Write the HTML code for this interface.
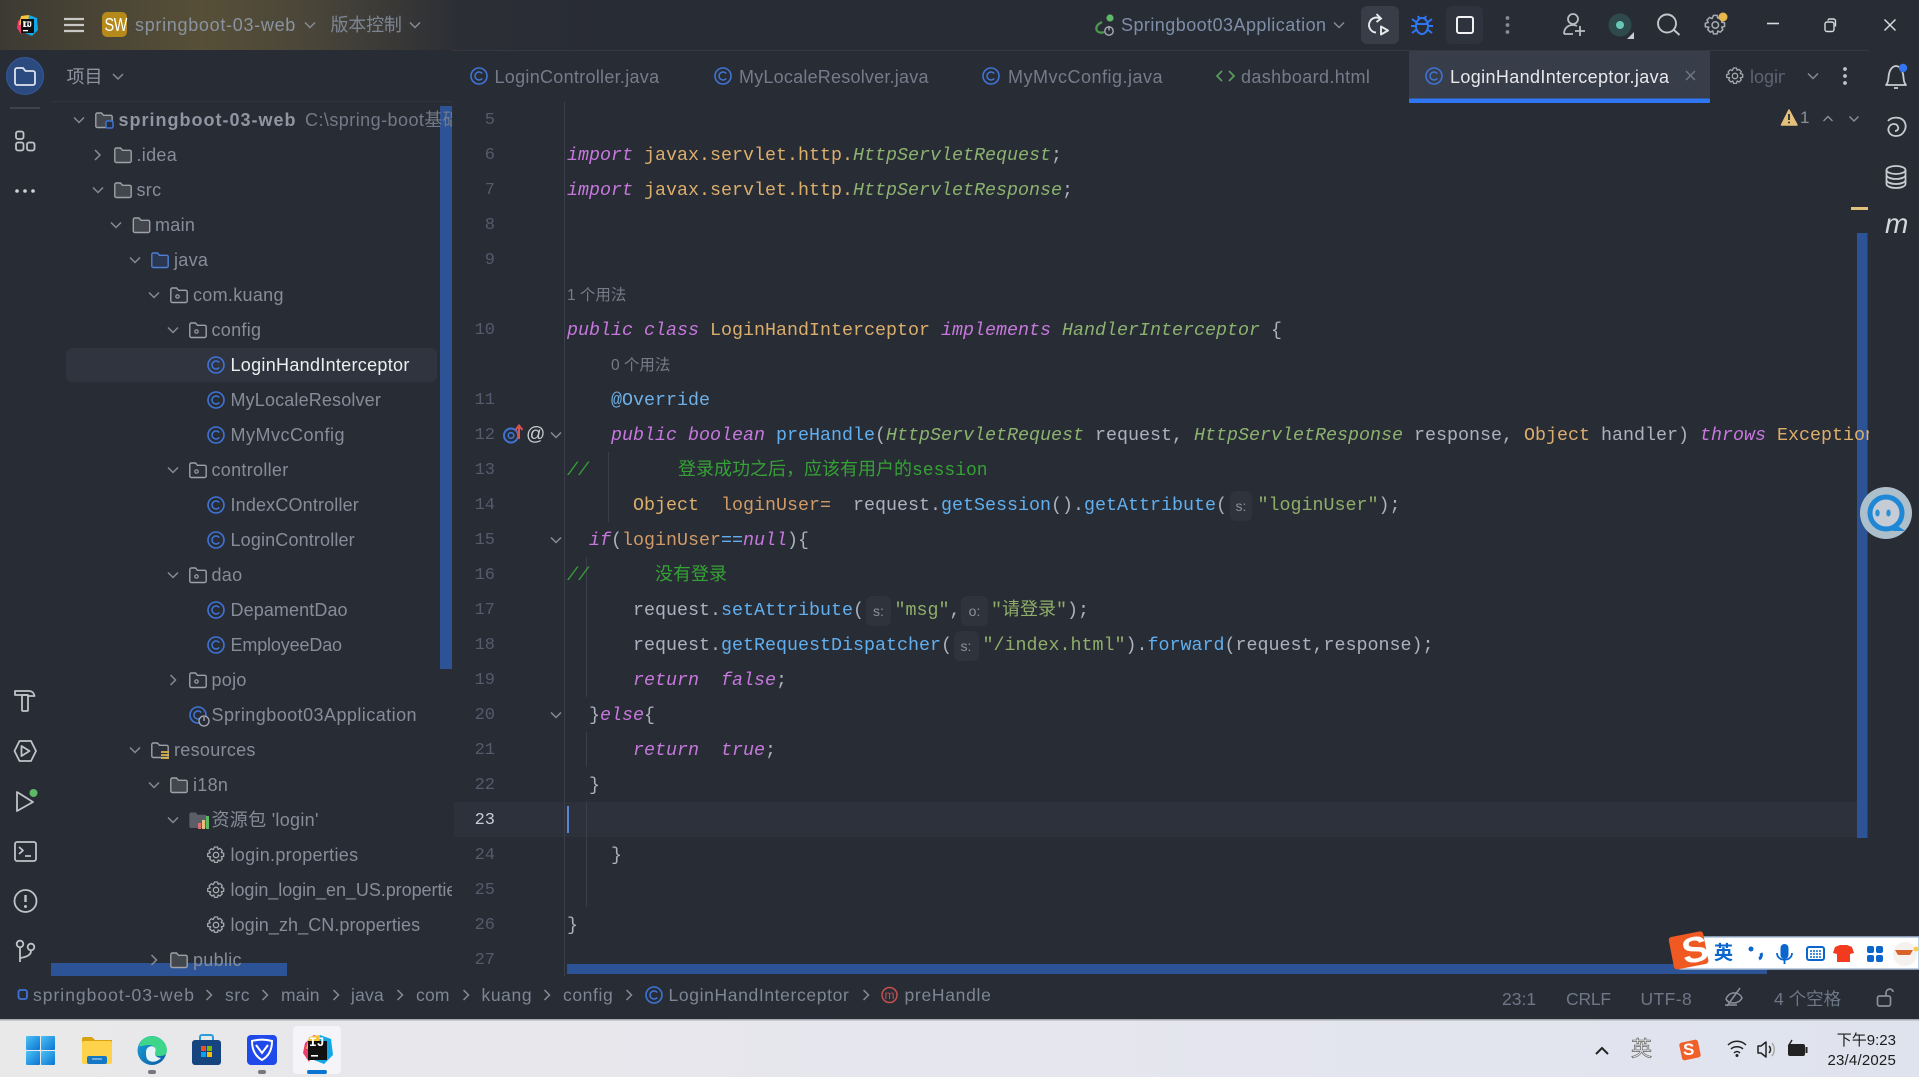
<!DOCTYPE html>
<html lang="zh"><head><meta charset="utf-8"><title>springboot-03-web</title>
<style>
html,body{margin:0;padding:0;width:1919px;height:1077px;overflow:hidden;background:#282c35}
body{position:relative;font-family:"Liberation Sans","Noto Sans CJK SC",sans-serif;font-size:18px;color:#868d99}
.a{position:absolute;white-space:pre;line-height:36px;height:36px}
svg.l{position:absolute;left:0;top:0}
.tree{position:absolute;left:0;top:0;width:452px;height:976px;overflow:hidden}
.tree .a{letter-spacing:.3px}
.ed{position:absolute;left:454px;top:102px;width:1415px;height:874px;overflow:hidden}
.ln{position:absolute;left:440px;width:55px;text-align:right;font:17px/36px "Liberation Mono",monospace;color:#535b6c;height:36px}
.c{position:absolute;white-space:pre;line-height:36px;height:36px;font-family:"Liberation Mono","Noto Sans CJK SC",monospace;font-size:18.33px;color:#abb2bf}
.k{color:#c678dd;font-style:italic}.g{color:#8cb26f;font-style:italic}.m{color:#61afef}.o{color:#dcae6c}.s{color:#8fae6a}.v{color:#d19a66}.e{color:#35a235}.z{font-size:18px}
.h{position:absolute;white-space:pre;line-height:36px;height:36px;font-size:15.5px;color:#757b87}
.iv{position:absolute;font-size:14px;line-height:30px;color:#8a8f99;background:#2f333c;border-radius:6px;height:30px;text-align:center}
.tab{letter-spacing:.2px;color:#747c8a}
.st{color:#6d7786;font-size:17.5px}
.bc{color:#7d8694;font-size:17.5px;letter-spacing:.2px}
</style></head><body>

<svg class="l" width="1919" height="1077" viewBox="0 0 1919 1077" fill="none">
<defs>
<linearGradient id="tb" x1="0" x2="1"><stop offset="0" stop-color="#3c3a33"/><stop offset=".105" stop-color="#574f37"/><stop offset=".16" stop-color="#4a4639"/><stop offset=".24" stop-color="#2c2e35"/><stop offset=".32" stop-color="#282c35"/></linearGradient>
<linearGradient id="bar" x1="0" x2="1"><stop offset="0" stop-color="#e9e9ea"/><stop offset=".5" stop-color="#e6e6ee"/><stop offset="1" stop-color="#dfe3ee"/></linearGradient>
<linearGradient id="win" x1="0" y1="0" x2="1" y2="1"><stop offset="0" stop-color="#4cc2f5"/><stop offset="1" stop-color="#0b74d2"/></linearGradient>
<linearGradient id="edge" x1="0" y1="0" x2="1" y2="1"><stop offset="0" stop-color="#1aa3d8"/><stop offset="1" stop-color="#0c59a4"/></linearGradient>
<path id="dn" d="M-5-2.5L0 2.5 5-2.5" stroke="#868b93" stroke-width="1.5"/>
<path id="rt" d="M-2.5-5L2.5 0-2.5 5" stroke="#868b93" stroke-width="1.5"/>
<path id="fs" d="M.8-5.5A1.5 1.5 0 0 1 2.3-7H6.5l2 2.3h7.2a1.5 1.5 0 0 1 1.5 1.5V6a1.5 1.5 0 0 1-1.5 1.5H2.3A1.5 1.5 0 0 1 .8 6z"/>
<use id="fo" href="#fs" fill="#43464d" stroke="#9da1a8" stroke-width="1.4"/>
<g id="pk"><use href="#fs" fill="#2c2f38" stroke="#9da1a8" stroke-width="1.4"/><circle cx="7.5" cy="1.5" r="1.7" stroke="#9da1a8" stroke-width="1.2"/></g>
<g id="cl"><circle cx="9" cy="0" r="8" stroke="#3f74d6" stroke-width="1.6"/><path d="M12.2-2.4A4 4 0 1 0 12.2 2.4" stroke="#3f74d6" stroke-width="1.5"/></g>
<g id="gr"><path d="M7.5-8h3l.6 2.3 2-.9 2.2 2.2-1 2 2.4.6v3l-2.4.6 1 2-2.2 2.2-2-1-.6 2.4h-3l-.6-2.4-2 1-2.2-2.2 1-2L.7 1.5v-3l2.4-.6-1-2 2.2-2.2 2 .9z" stroke="#a6a9b0" stroke-width="1.3" stroke-linejoin="round"/><circle cx="9" cy="0" r="2.7" stroke="#a6a9b0" stroke-width="1.3"/></g>
</defs>

<!-- bars -->
<rect x="0" y="0" width="1919" height="50" fill="url(#tb)"/>
<rect x="452" y="50" width="1417" height="1" fill="#343843"/>
<rect x="51" y="101" width="401" height="1" fill="#30343d"/>
<rect x="10" y="107" width="30" height="2" fill="#3d424d"/>
<rect x="0" y="1020" width="1919" height="57" fill="url(#bar)"/>
<rect x="0" y="1019" width="1919" height="1.5" fill="#a9abb0"/>

<!-- title bar icons -->
<g transform="translate(16 15)">
<polygon points="2,6 9,0 16,3 10,10 5,19 1,13" fill="#ee3b6b"/><polygon points="13,0 21,3 22,15 16,21 9,18" fill="#12a8e8"/><polygon points="5,1 13,0 12,8 3,10" fill="#f8c23a"/>
<rect x="5" y="4" width="13" height="14" fill="#111"/><rect x="7" y="15" width="5" height="1.3" fill="#fff"/><path d="M8 6v5M12 6v5M11 11h2" stroke="#fff" stroke-width="1.2"/>
</g>
<path d="M64 19h20M64 25h20M64 31h20" stroke="#c8c8c4" stroke-width="2.2"/>
<rect x="102" y="12" width="25" height="25" rx="5" fill="#b58a1b"/>
<use href="#dn" x="310" y="25"/><use href="#dn" x="415" y="25"/>

<path d="M1097 31c-2-4 1-7 5-9" stroke="#4d9a4f" stroke-width="2.2"/><path d="M1097 31c2 2 5 2 7 1" stroke="#4d9a4f" stroke-width="2.2"/>
<circle cx="1110" cy="18" r="3.6" fill="#5fb865"/><circle cx="1109" cy="31" r="4.2" stroke="#a8acb3" stroke-width="1.4"/><path d="M1109 26v4.5" stroke="#a8acb3" stroke-width="1.4"/>
<use href="#dn" x="1339" y="25" />
<rect x="1361" y="6" width="38" height="38" rx="6" fill="#383d47"/>
<path d="M1381 19A7.5 7.5 0 1 0 1376 32.500" stroke="#e7e9ec" stroke-width="1.900"/><path d="M1376.500 14l4.500 4.500-4.500 3.500" stroke="#e7e9ec" stroke-width="1.900"/><path d="M1381 26.500l7 4-7 4z" stroke="#e7e9ec" stroke-width="1.900" stroke-linejoin="round"/>
<g stroke="#2f76f2" stroke-width="2"><ellipse cx="1422" cy="26" rx="6" ry="8"/><path d="M1416 24h12M1418 16l1.5 3M1426 16l-1.5 3M1412 19l4 3M1432 19l-4 3M1411 26h5M1433 26h-5M1412 33l4-3M1432 33l-4-3"/></g>
<rect x="1446" y="6" width="37" height="38" rx="6" fill="#2f333d"/>
<rect x="1457" y="17" width="16" height="16" rx="2" stroke="#f0f1f3" stroke-width="2"/>
<g fill="#888d95"><circle cx="1507.5" cy="18" r="1.9"/><circle cx="1507.5" cy="25" r="1.9"/><circle cx="1507.5" cy="32" r="1.9"/></g>
<g stroke="#b9bcc2" stroke-width="1.8"><circle cx="1573" cy="19" r="5"/><path d="M1564 34c0-5 3-9 9-9 2 0 3 .5 4 1M1564 34h9"/><path d="M1575 31h10M1580 26v10"/></g>
<circle cx="1620" cy="25" r="11.5" fill="#2f4a4d"/><circle cx="1620" cy="25" r="4" fill="#66c7b7"/><path d="M1634 32v7h-7z" fill="#c8cbd0"/>
<circle cx="1667" cy="23.5" r="9" stroke="#c3c6cb" stroke-width="1.9"/><path d="M1674 30l5.5 5" stroke="#c3c6cb" stroke-width="1.9"/>
<use href="#gr" transform="translate(1704.5 25) scale(1.2)"/>
<circle cx="1723" cy="17" r="4.5" fill="#e8b94e"/>
<path d="M1767 23.5h12" stroke="#d8dade" stroke-width="1.6"/>
<rect x="1825" y="22" width="9" height="9.5" rx="2" stroke="#d8dade" stroke-width="1.4"/><path d="M1828 20.5c0-1 .8-1.5 1.5-1.5h4c1.2 0 2 1 2 2v5.5" stroke="#d8dade" stroke-width="1.4"/>
<path d="M1884.5 19.5l11 11M1895.5 19.5l-11 11" stroke="#d8dade" stroke-width="1.5"/>

<!-- left strip -->
<ellipse cx="25" cy="76" rx="18.5" ry="18.5" fill="#2a4a80" stroke="#36599c" stroke-width="1"/>
<path d="M15 70a2 2 0 0 1 2-2h6l2.5 3H33a2 2 0 0 1 2 2v10a2 2 0 0 1-2 2H17a2 2 0 0 1-2-2z" stroke="#dfe4ee" stroke-width="1.8"/>
<g stroke="#c0c3c9" stroke-width="1.8"><rect x="16" y="131.5" width="7.5" height="7.5" rx="2"/><rect x="16" y="142.5" width="7.5" height="8" rx="2"/><rect x="27" y="142.5" width="7.5" height="8" rx="2"/></g>
<g fill="#d0d3d8"><circle cx="17" cy="191" r="1.8"/><circle cx="25" cy="191" r="1.8"/><circle cx="33" cy="191" r="1.8"/></g>
<g stroke="#c0c3c9" stroke-width="1.8" stroke-linejoin="round">
<path d="M15 691h14c3 0 5 2 5.5 5h-6.5v-1H15z"/><rect x="22" y="695" width="6" height="16" rx="1"/>
<path d="M14.5 751l5-10h11.5l5 10-5 10H19.5z"/><path d="M21.5 746l8 5-8 5z"/>
<path d="M17 792l16 10-16 9z"/>
<rect x="15" y="842" width="21" height="19" rx="2"/><path d="M19 847l4 3.5-4 3.5M25 856h6"/>
<circle cx="25.5" cy="901" r="11"/>
<circle cx="20" cy="944" r="3.3"/><circle cx="31" cy="947" r="3.3"/><path d="M20 948v14M31 951c0 4-4 6-11 7"/>
</g>
<circle cx="33.5" cy="793" r="4" fill="#5fb865"/>
<path d="M25.5 895v7" stroke="#c0c3c9" stroke-width="2.4"/><circle cx="25.5" cy="906.5" r="1.5" fill="#c0c3c9"/>

<!-- selected row -->
<rect x="66" y="348" width="371" height="34" rx="6" fill="#30343e"/>
<!-- tree scrollbars -->
<rect x="440" y="106" width="12" height="563" fill="#2c5396"/>
<rect x="51" y="963" width="236" height="13" fill="#2c5396"/>

<!-- tree icons -->
<use href="#dn" x="79" y="120"/><g transform="translate(95 120)"><use href="#fs" fill="#43464d" stroke="#9da1a8" stroke-width="1.4"/><rect x="11" y="1" width="7" height="7" rx="1.5" fill="#282c35" stroke="#3f74d6" stroke-width="1.5"/></g>
<use href="#rt" x="97.5" y="155"/><use href="#fo" x="114" y="155"/>
<use href="#dn" x="98" y="190"/><use href="#fo" x="114" y="190"/>
<use href="#dn" x="116" y="225"/><use href="#fo" x="132.5" y="225"/>
<use href="#dn" x="135" y="260"/><use href="#fs" x="151" y="260" fill="#2c3750" stroke="#4f7fd8" stroke-width="1.4"/>
<use href="#dn" x="154" y="295"/><use href="#pk" x="170" y="295"/>
<use href="#dn" x="173" y="330"/><use href="#pk" x="189" y="330"/>
<use href="#cl" x="207" y="365"/><use href="#cl" x="207" y="400"/><use href="#cl" x="207" y="435"/>
<use href="#dn" x="173" y="470"/><use href="#pk" x="189" y="470"/>
<use href="#cl" x="207" y="505"/><use href="#cl" x="207" y="540"/>
<use href="#dn" x="173" y="575"/><use href="#pk" x="189" y="575"/>
<use href="#cl" x="207" y="610"/><use href="#cl" x="207" y="645"/>
<use href="#rt" x="173" y="680"/><use href="#pk" x="189" y="680"/>
<use href="#cl" x="189" y="715"/><circle cx="204" cy="721" r="5" fill="#282c35" stroke="#a8acb3" stroke-width="1.3"/><path d="M204 717v4" stroke="#a8acb3" stroke-width="1.3"/>
<use href="#dn" x="135" y="750"/><use href="#fs" x="151" y="750" fill="#2c2f38" stroke="#9da1a8" stroke-width="1.4"/><path d="M161 752h8M161 755h8M161 758h8" stroke="#e0b44a" stroke-width="1.8"/>
<use href="#dn" x="154" y="785"/><use href="#fo" x="170" y="785"/>
<use href="#dn" x="173" y="820"/><use href="#fs" x="189" y="820" fill="#5a5e66" stroke="#5a5e66" stroke-width="1"/>
<rect x="198" y="823" width="3" height="6" fill="#e06c75"/><rect x="202" y="820" width="3" height="9" fill="#e5c07b"/><rect x="206" y="816" width="3" height="13" fill="#5fb865"/>
<use href="#gr" x="207" y="855"/><use href="#gr" x="207" y="890"/><use href="#gr" x="207" y="925"/>
<use href="#rt" x="154" y="960"/><use href="#fo" x="170" y="960"/>

<!-- tabs -->
<rect x="1409" y="51" width="301" height="52" fill="#383d4a"/>
<rect x="1409" y="98.5" width="301" height="4.5" rx="1" fill="#2f76f2"/>
<use href="#cl" x="470" y="76"/><use href="#cl" x="714" y="76"/><use href="#cl" x="982" y="76"/><use href="#cl" x="1425" y="76"/>
<path d="M1222 71l-5 5 5 5M1229 71l5 5-5 5" stroke="#5a9e5d" stroke-width="1.7"/>
<path d="M1686 71l9 9M1695 71l-9 9" stroke="#737984" stroke-width="1.4"/>
<use href="#gr" x="1726" y="76"/>
<use href="#dn" x="1813" y="76" /><g fill="#c0c3c9"><circle cx="1845" cy="69" r="1.9"/><circle cx="1845" cy="76" r="1.9"/><circle cx="1845" cy="83" r="1.9"/></g>

<!-- right strip -->
<g stroke="#c8cbd0" stroke-width="1.8" stroke-linejoin="round">
<path d="M1886 85c3-3 2-7 3-11 1-5 4-8 7-8s6 3 7 8c1 4 0 8 3 11z"/><path d="M1894 88h4"/>
<path d="M1888 121c3-4 12-5 16 0 4 6 0 15-8 15-6 0-9-5-7-9 2-4 8-4 9 0 1 2-1 4-3 4"/>
<ellipse cx="1896" cy="170" rx="9.500" ry="4"/><path d="M1886.500 170v14c0 2 4 4 9.500 4s9.500-2 9.500-4v-14M1886.500 175c0 2 4 4 9.500 4s9.500-2 9.500-4M1886.500 180c0 2 4 4 9.500 4s9.500-2 9.500-4"/>
</g>
<circle cx="1903" cy="68" r="4.200" fill="#3574f0"/>

<!-- warn -->
<path d="M1789 110l8 15h-15.500z" fill="#e5c07b" stroke="#e5c07b" stroke-width="1.500" stroke-linejoin="round"/><path d="M1789 114v6" stroke="#282c35" stroke-width="1.800"/><circle cx="1789" cy="122.500" r="1" fill="#282c35"/>
<path d="M1823.500 121l4.500-4.500 4.500 4.500" stroke="#8a8f98" stroke-width="1.400"/><path d="M1849.500 116.500l4.500 4.500 4.500-4.500" stroke="#8a8f98" stroke-width="1.400"/>

<!-- editor decor -->
<rect x="454" y="802" width="1403" height="35" fill="#2c313c"/>
<rect x="564" y="102" width="1" height="874" fill="#3a3f4b"/>
<g fill="#3a3f4a"><rect x="608" y="452" width="1" height="70"/><rect x="586" y="557" width="1" height="140"/><rect x="586" y="732" width="1" height="35"/><rect x="586" y="802" width="1" height="105"/></g>
<rect x="1857" y="233" width="10.500" height="605" fill="#2c5396"/>
<rect x="1851" y="207" width="17" height="3" fill="#e5c07b"/>
<rect x="567" y="964" width="1200" height="10" fill="#2c5396"/>
<rect x="567" y="806" width="2" height="27" fill="#5b86d8"/>
<!-- gutter -->
<circle cx="511" cy="435.500" r="7" stroke="#3f74d6" stroke-width="2"/><circle cx="511" cy="435.500" r="2.800" stroke="#3f74d6" stroke-width="1.600"/>
<path d="M519 439v-13M515.500 430l3.500-4.500 3.500 4.500" stroke="#d9534f" stroke-width="2"/>
<use href="#dn" x="556" y="435"/><use href="#dn" x="556" y="540"/><use href="#dn" x="556" y="715"/>

<!-- status bar -->
<rect x="18.500" y="990" width="8.500" height="9" rx="2" stroke="#3f74d6" stroke-width="1.800"/>
<use href="#rt" x="209" y="995"/><use href="#rt" x="265" y="995"/><use href="#rt" x="336" y="995"/><use href="#rt" x="400" y="995"/><use href="#rt" x="466" y="995"/><use href="#rt" x="547" y="995"/><use href="#rt" x="629" y="995"/><use href="#rt" x="866" y="995"/>
<use href="#cl" x="645" y="995"/>
<circle cx="889.500" cy="995" r="7.500" stroke="#c4504f" stroke-width="1.500"/>
<g stroke="#8a919c" stroke-width="1.500"><path d="M1726 999c3-8 13-8 16-1-3 6-13 7-16 1z"/><path d="M1727 1006l13-18M1725 1005h12"/></g>
<g stroke="#8a919c" stroke-width="1.700"><rect x="1877.500" y="996" width="13" height="10" rx="2"/><path d="M1886 996v-3c0-5 7-5 7-1"/></g>

<!-- taskbar -->
<rect x="293" y="1026" width="48" height="48" rx="4" fill="#f4f4f9"/>
<g fill="url(#win)"><rect x="26" y="1036" width="14" height="14" rx="1"/><rect x="41" y="1036" width="14" height="14" rx="1"/><rect x="26" y="1051" width="14" height="14" rx="1"/><rect x="41" y="1051" width="14" height="14" rx="1"/></g>
<path d="M82 1039a2 2 0 0 1 2-2h8l3 3h17v4H82z" fill="#d9a20f"/><rect x="82" y="1041" width="30" height="23" rx="2" fill="#ffd24c"/><rect x="87" y="1056" width="20" height="8" rx="2" fill="#1677c4"/><path d="M92 1059h10" stroke="#bfe0f5" stroke-width="1"/>
<circle cx="152" cy="1050.500" r="14.500" fill="url(#edge)"/><path d="M139 1046c3-10 13-12 20-8 6 3 8 8 8 13 0 4-4 5-8 5-3 0-5-1-4-3 2-4-1-8-6-8-5 0-8 2-10 1z" fill="#3dd68a"/><path d="M146 1052c0-5 5-7 8-5 3 2 1 5 1 7s3 4 6 4c-4 4-9 5-13 2-2-2-2-5-2-8z" fill="#ffffff" opacity=".9"/>
<path d="M200 1041v-4a2 2 0 0 1 2-2h9a2 2 0 0 1 2 2v4" stroke="#2b9cd8" stroke-width="2"/><rect x="192" y="1040" width="29" height="25" rx="3" fill="#15447e"/><rect x="201" y="1046" width="5" height="5" fill="#f25022"/><rect x="207" y="1046" width="5" height="5" fill="#7fba00"/><rect x="201" y="1052" width="5" height="5" fill="#00a4ef"/><rect x="207" y="1052" width="5" height="5" fill="#ffb900"/>
<rect x="247" y="1035" width="30" height="30" rx="4" fill="#1f49ea"/><path d="M252 1041c7-2 13-2 20 0 0 9-3 15-10 19-7-4-10-10-10-19z" stroke="#fff" stroke-width="2"/><path d="M256 1045l6 8 6-8" stroke="#fff" stroke-width="2"/>
<g transform="translate(302 1035)">
<polygon points="3,8 12,0 22,4 14,14 7,27 1,18" fill="#ee3b6b"/><polygon points="18,0 29,4 31,20 22,29 12,25" fill="#12a8e8"/><polygon points="7,2 18,0 17,11 4,14" fill="#f8c23a"/>
<rect x="6" y="6" width="19" height="19" fill="#111"/><rect x="9" y="20" width="7" height="1.600" fill="#fff"/>
</g>
<rect x="148" y="1070" width="8" height="4" rx="2" fill="#77787c"/><rect x="258" y="1070" width="8" height="4" rx="2" fill="#77787c"/>
<rect x="307" y="1070" width="20" height="4" rx="2" fill="#0a74d0"/>
<!-- tray -->
<path d="M1596 1054l6-6 6 6" stroke="#222" stroke-width="2"/>
<g transform="rotate(-12 1690 1050)"><rect x="1680.500" y="1041" width="19" height="18" rx="2.500" fill="#f0602a"/></g>
<g stroke="#222" stroke-width="1.500"><path d="M1728 1045c5-5 13-5 18 0M1731 1049c3-3 9-3 12 0M1734 1053c2-2 4-2 6 0"/><path d="M1758 1046h3l5-4v15l-5-4h-3z" stroke-linejoin="round"/><path d="M1769 1046c2 2 2 5 0 7"/><path d="M1772 1043c3 4 3 9 0 13" stroke="#aaa"/></g>
<circle cx="1737" cy="1055.500" r="1.500" fill="#222"/>
<rect x="1788" y="1044" width="17" height="12" rx="2" fill="#222"/><rect x="1805.500" y="1047" width="2" height="6" fill="#222"/><path d="M1792 1040l-3 5h4l-2 4" stroke="#222" stroke-width="1.400"/>
</svg>

<!-- TITLE TEXT -->
<div class="a" style="left:102px;top:7px;width:25px;text-align:center;color:#fff;font-size:18px;letter-spacing:-.5px;transform:scaleX(.8)">SW</div>
<div class="a" style="left:135px;top:7px;letter-spacing:.7px;color:#8a93a2">springboot-03-web</div>
<div class="a" style="left:330.500px;top:7px;color:#7d8593;letter-spacing:-.2px">版本控制</div>
<div class="a" style="left:1121px;top:7px;letter-spacing:.45px;color:#7e8ea6">Springboot03Application</div>
<div class="a" style="left:22.500px;top:17.500px;color:#fff;font:bold 8px/16px 'Liberation Mono',monospace;height:16px">IJ</div>
<div class="a" style="left:309px;top:1034px;color:#fff;font:bold 13px/18px 'Liberation Mono',monospace;height:18px">IJ</div>

<!-- TREE -->
<div class="tree">
<div class="a" style="left:66.500px;top:59px;color:#8d94a0;letter-spacing:0">项目</div>
<div class="a" style="left:118.500px;top:102px;font-weight:bold;color:#8f96a2;letter-spacing:1px">springboot-03-web</div>
<div class="a" style="left:305px;top:102px;color:#737a87;letter-spacing:.45px">C:\spring-boot基础项目</div>
<div class="a" style="left:136.500px;top:137px">.idea</div>
<div class="a" style="left:136.500px;top:172px">src</div>
<div class="a" style="left:155px;top:207px">main</div>
<div class="a" style="left:174px;top:242px">java</div>
<div class="a" style="left:193px;top:277px">com.kuang</div>
<div class="a" style="left:211.500px;top:312px">config</div>
<div class="a" style="left:230.500px;top:347px;color:#eceef1">LoginHandInterceptor</div>
<div class="a" style="left:230.500px;top:382px;letter-spacing:.15px">MyLocaleResolver</div>
<div class="a" style="left:230.500px;top:417px;letter-spacing:.5px">MyMvcConfig</div>
<div class="a" style="left:211.500px;top:452px">controller</div>
<div class="a" style="left:230.500px;top:487px;letter-spacing:.16px">IndexCOntroller</div>
<div class="a" style="left:230.500px;top:522px;letter-spacing:.15px">LoginController</div>
<div class="a" style="left:211.500px;top:557px">dao</div>
<div class="a" style="left:230.500px;top:592px;letter-spacing:.1px">DepamentDao</div>
<div class="a" style="left:230.500px;top:627px;letter-spacing:-.15px">EmployeeDao</div>
<div class="a" style="left:211.500px;top:662px">pojo</div>
<div class="a" style="left:211.500px;top:697px;letter-spacing:.45px">Springboot03Application</div>
<div class="a" style="left:174px;top:732px">resources</div>
<div class="a" style="left:193px;top:767px">i18n</div>
<div class="a" style="left:211.500px;top:802px">资源包 'login'</div>
<div class="a" style="left:230.500px;top:837px">login.properties</div>
<div class="a" style="left:230.500px;top:872px;letter-spacing:-.05px">login_login_en_US.properties</div>
<div class="a" style="left:230.500px;top:907px;letter-spacing:.07px">login_zh_CN.properties</div>
<div class="a" style="left:193px;top:942px">public</div>
</div>
<svg class="l" width="140" height="90" style="left:110px;top:60px" fill="none"><path d="M3 14l5 5 5-5" stroke="#868b93" stroke-width="1.500"/></svg>

<!-- TABS -->
<div class="a tab" style="left:494.500px;top:59px;letter-spacing:.29px">LoginController.java</div>
<div class="a tab" style="left:739px;top:59px;letter-spacing:.22px">MyLocaleResolver.java</div>
<div class="a tab" style="left:1008px;top:59px;letter-spacing:.5px">MyMvcConfig.java</div>
<div class="a tab" style="left:1241px;top:59px;letter-spacing:.37px">dashboard.html</div>
<div class="a tab" style="left:1450px;top:59px;color:#e6e8ec;letter-spacing:.37px">LoginHandInterceptor.java</div>
<div class="a" style="left:1750px;top:59px;width:35px;overflow:hidden;color:#5d6472">login</div>
<div class="a" style="left:1800px;top:100px;color:#8a8f98;font-size:17px">1</div>
<div class="a" style="left:1885px;top:206px;color:#d5d8dc;font:italic 28px/36px 'Liberation Sans',sans-serif">m</div>

<!-- LINE NUMBERS -->
<div class="ln" style="top:103px">5</div><div class="ln" style="top:138px">6</div><div class="ln" style="top:173px">7</div><div class="ln" style="top:208px">8</div><div class="ln" style="top:243px">9</div><div class="ln" style="top:313px">10</div><div class="ln" style="top:383px">11</div><div class="ln" style="top:418px">12</div><div class="ln" style="top:453px">13</div><div class="ln" style="top:488px">14</div><div class="ln" style="top:523px">15</div><div class="ln" style="top:558px">16</div><div class="ln" style="top:593px">17</div><div class="ln" style="top:628px">18</div><div class="ln" style="top:663px">19</div><div class="ln" style="top:698px">20</div><div class="ln" style="top:733px">21</div><div class="ln" style="top:768px">22</div><div class="ln" style="top:803px;color:#c8ccd4">23</div><div class="ln" style="top:838px">24</div><div class="ln" style="top:873px">25</div><div class="ln" style="top:908px">26</div><div class="ln" style="top:943px">27</div>
<div class="a" style="left:526px;top:417px;color:#c9ccd1;font-size:19px">@</div>

<!-- CODE: page coords translated by container -->
<div class="ed"><div style="position:absolute;left:-454px;top:-101px;width:1919px;height:1077px">
<div class="c" style="left:567px;top:137px"><span class="k">import</span> <span class="o">javax.servlet.http.</span><span class="g">HttpServletRequest</span>;</div>
<div class="c" style="left:567px;top:172px"><span class="k">import</span> <span class="o">javax.servlet.http.</span><span class="g">HttpServletResponse</span>;</div>
<div class="h" style="left:567px;top:277px">1 个用法</div>
<div class="c" style="left:567px;top:312px"><span class="k">public class</span> <span class="o">LoginHandInterceptor</span> <span class="k">implements</span> <span class="g">HandlerInterceptor</span> {</div>
<div class="h" style="left:611px;top:347px">0 个用法</div>
<div class="c" style="left:611px;top:382px;color:#6fb0e6">@Override</div>
<div class="c" style="left:611px;top:417px"><span class="k">public boolean</span> <span class="m">preHandle</span>(<span class="g">HttpServletRequest</span> request, <span class="g">HttpServletResponse</span> response, <span class="o">Object</span> handler) <span class="k">throws</span> <span class="o">Exception</span> {</div>
<div class="c e" style="left:567px;top:452px;font-style:italic">//</div>
<div class="c e z" style="left:678px;top:452px">登录成功之后，应该有用户的session</div>
<div class="c" style="left:633px;top:487px"><span class="o">Object</span>  <span class="v">loginUser=</span>  request.<span class="m">getSession</span>().<span class="m">getAttribute</span>(</div>
<div class="iv" style="left:1230px;top:490px;width:22px">s:</div>
<div class="c s" style="left:1257.500px;top:487px">"loginUser"<span style="color:#abb2bf">);</span></div>
<div class="c" style="left:589px;top:522px"><span class="k">if</span>(<span class="v">loginUser</span><span class="m">==</span><span class="k">null</span>){</div>
<div class="c e" style="left:567px;top:557px;font-style:italic">//</div>
<div class="c e z" style="left:655px;top:557px">没有登录</div>
<div class="c" style="left:633px;top:592px">request.<span class="m">setAttribute</span>(</div>
<div class="iv" style="left:866px;top:595px;width:25px">s:</div>
<div class="c s" style="left:894.500px;top:592px">"msg"<span style="color:#abb2bf">,</span></div>
<div class="iv" style="left:961px;top:595px;width:27px">o:</div>
<div class="c s" style="left:991px;top:592px">"<span class="z">请登录</span>"<span style="color:#abb2bf">);</span></div>
<div class="c" style="left:633px;top:627px">request.<span class="m">getRequestDispatcher</span>(</div>
<div class="iv" style="left:953.500px;top:630px;width:25px">s:</div>
<div class="c" style="left:982.500px;top:627px"><span class="s">"/index.html"</span>).<span class="m">forward</span>(request,response);</div>
<div class="c" style="left:633px;top:662px"><span class="k">return  false</span>;</div>
<div class="c" style="left:589px;top:697px">}<span class="k">else</span>{</div>
<div class="c" style="left:633px;top:732px"><span class="k">return  true</span>;</div>
<div class="c" style="left:589px;top:767px">}</div>
<div class="c" style="left:611px;top:837px">}</div>
<div class="c" style="left:567px;top:907px">}</div>
</div></div>

<!-- STATUS -->
<div class="a bc" style="left:33px;top:977px;letter-spacing:1px">springboot-03-web</div>
<div class="a bc" style="left:225px;top:977px;letter-spacing:.6px">src</div>
<div class="a bc" style="left:281px;top:977px">main</div>
<div class="a bc" style="left:351px;top:977px">java</div>
<div class="a bc" style="left:416px;top:977px">com</div>
<div class="a bc" style="left:481.500px;top:977px;letter-spacing:.6px">kuang</div>
<div class="a bc" style="left:563px;top:977px;letter-spacing:.6px">config</div>
<div class="a bc" style="left:668.500px;top:977px;letter-spacing:.63px">LoginHandInterceptor</div>
<div class="a bc" style="left:904.500px;top:977px;letter-spacing:.7px">preHandle</div>
<div class="a" style="left:884.500px;top:986px;height:18px;line-height:18px;font-size:12px;color:#c4504f">m</div>
<div class="a st" style="left:1502px;top:981px">23:1</div>
<div class="a st" style="left:1566px;top:981px;letter-spacing:-.2px">CRLF</div>
<div class="a st" style="left:1640.500px;top:981px;letter-spacing:.4px">UTF-8</div>
<div class="a st" style="left:1774px;top:981px">4 个空格</div>

<!-- TRAY TEXT -->
<div class="a" style="left:1631px;top:1032px;font-size:21px;color:#eeeeee;-webkit-text-stroke:.7px #666">英</div>
<div class="a" style="left:1683px;top:1032px;font-size:17px;font-weight:bold;color:#fff">S</div>
<div class="a" style="right:23px;top:1023px;font-size:15px;color:#1c1c1c">下午9:23</div>
<div class="a" style="right:23px;top:1043px;font-size:15px;letter-spacing:.2px;color:#1c1c1c">23/4/2025</div>

<!-- FLOATING -->
<svg class="l" width="1919" height="1077" fill="none">
<circle cx="1886" cy="513" r="26" fill="#adbfca"/><circle cx="1886" cy="513" r="16" fill="#c5ccd5" stroke="#1f88d6" stroke-width="5"/>
<path d="M1896 526l6 4-8 0z" fill="#1f88d6" stroke="#1f88d6" stroke-width="2"/>
<ellipse cx="1877.500" cy="513" rx="2.200" ry="3.500" fill="#2b8fd6"/><ellipse cx="1888.500" cy="513" rx="2.200" ry="3.500" fill="#2b8fd6"/>
<rect x="1680" y="937" width="239" height="32" fill="#fff" stroke="#a9bfd8" stroke-width="1.500"/>
<g transform="rotate(-11 1688 950)"><rect x="1671" y="934" width="35" height="33" rx="3" fill="#f05a22"/></g>
<circle cx="1751" cy="949" r="2.500" fill="#0a66cc"/><path d="M1761 953c1 2 0 5-2 6" stroke="#0a66cc" stroke-width="3"/>
<rect x="1780.500" y="944" width="8" height="15" rx="4" fill="#0a66cc"/><path d="M1777 953c0 9 15 9 15 0M1784.500 960v4" stroke="#0a66cc" stroke-width="1.800"/>
<rect x="1807" y="947" width="17" height="13" rx="2" stroke="#0a66cc" stroke-width="2"/><path d="M1810 951h11M1810 954h11M1810 957h11" stroke="#0a66cc" stroke-width="1.500" stroke-dasharray="2 1"/>
<path d="M1835 947l5-2h7l5 2 2 6-4 1v8h-13v-8l-4-1z" fill="#f23a1e"/>
<g fill="#0a66cc"><rect x="1867" y="946" width="7" height="7" rx="2"/><rect x="1876" y="946" width="7" height="7" rx="2"/><rect x="1867" y="955" width="7" height="7" rx="2"/><rect x="1876" y="955" width="7" height="7" rx="2"/></g>
<circle cx="1905" cy="954" r="12" fill="#f4f1ee"/><path d="M1895 950h18l-3 5h-12z" fill="#d9612a"/><circle cx="1916" cy="949" r="2.500" fill="#f3cf4d"/>
</svg>
<div class="a" style="left:1675px;top:932px;width:40px;text-align:center;font-size:36px;font-weight:bold;color:#fff;transform:rotate(-11deg) scaleX(1.1);line-height:36px">S</div>
<div class="a" style="left:1714px;top:936px;font-size:19px;font-weight:bold;color:#0a66cc">英</div>
</body></html>
